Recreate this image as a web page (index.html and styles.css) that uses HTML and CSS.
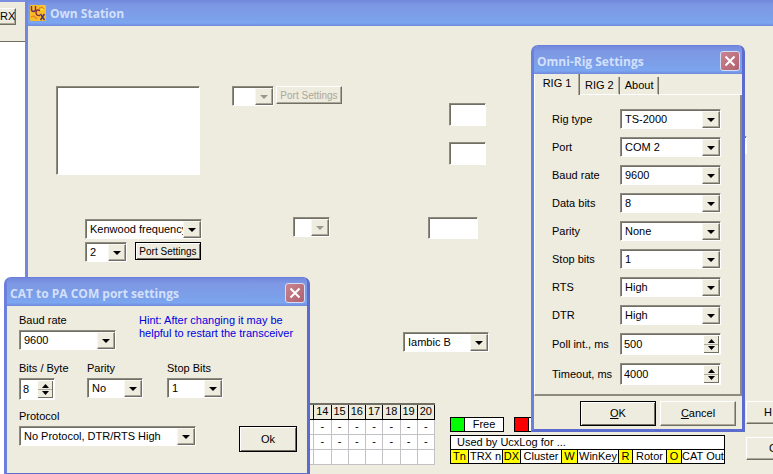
FILE: index.html
```html
<!DOCTYPE html>
<html lang="en">
<head>
<meta charset="utf-8">
<title>Own Station</title>
<link rel="stylesheet" href="styles.css">
</head>
<body>
<div class="log-window">
  <div class="log-toolbar"><button class="btn btn-trx" type="button">RX</button></div>
</div>

<main class="station">
  <header class="titlebar station-title">
    <svg class="app-icon" viewBox="0 0 16 16" aria-hidden="true">
      <rect width="16" height="16" rx="1" fill="#f9bd28"/>
      <circle cx="12" cy="3" r="2.500" fill="#ffe23c"/>
      <path d="M9 3.500l3-1.500 2 2M1 12l3-1 3 3" stroke="#e8862a" stroke-width="1.500" fill="none"/>
      <path d="M1.500 1v3.500q0 2 2 2t2-2V1" stroke="#6b2a5e" stroke-width="1.400" fill="none"/>
      <path d="M10 5.500q-4-1.500-4 2t4 3" stroke="#8a2a3c" stroke-width="1.400" fill="none"/>
      <path d="M10.500 9l4 6M14.500 9l-4 6" stroke="#4c2c84" stroke-width="1.400" fill="none"/>
    </svg>
    <h1>Own Station</h1>
  </header>

  <div class="form">
    <div class="row row-top">
      <textarea class="field memo" aria-label="Stations"></textarea>
      <div class="port-pair">
        <span class="combo is-disabled w-port"><select aria-label="Port" disabled><option></option></select></span>
        <button class="btn btn-port" type="button" disabled>Port Settings</button>
      </div>
      <div class="small-fields">
        <input class="field" aria-label="Value 1">
        <input class="field" aria-label="Value 2">
      </div>
      <input class="field far-field" aria-label="Value 3">
    </div>

    <div class="row row-mid">
      <div class="cat-group">
        <span class="combo w-kenwood"><select aria-label="CAT output"><option>Kenwood frequency</option></select></span>
        <div class="cat-line">
          <span class="combo w-port"><select aria-label="CAT port"><option>2</option></select></span>
          <button class="btn btn-port is-default" type="button">Port Settings</button>
        </div>
      </div>
      <span class="combo is-disabled w-aux"><select aria-label="Auxiliary port" disabled><option></option></select></span>
      <input class="field aux-field" aria-label="Auxiliary value">
    </div>

    <div class="row row-keyer">
      <span class="combo w-keyer"><select aria-label="Keyer mode"><option>Iambic B</option></select></span>
    </div>

    <div class="row row-bottom">
      <table class="ports">
        <thead><tr><th></th><th>14</th><th>15</th><th>16</th><th>17</th><th>18</th><th>19</th><th>20</th></tr></thead>
        <tbody>
          <tr><td></td><td>-</td><td>-</td><td>-</td><td>-</td><td>-</td><td>-</td><td>-</td></tr>
          <tr><td></td><td>-</td><td>-</td><td>-</td><td>-</td><td>-</td><td>-</td><td>-</td></tr>
          <tr><td></td><td></td><td></td><td></td><td></td><td></td><td></td><td></td></tr>
        </tbody>
      </table>
      <div class="legend">
        <div class="legend-states">
          <div class="state"><i class="swatch green"></i><span>Free</span></div>
          <div class="state"><i class="swatch red"></i><span></span></div>
        </div>
        <div class="legend-box">
          <div class="legend-head">Used by UcxLog for ...</div>
          <div class="legend-keys">
            <b>Tn</b><span>TRX n</span><b>DX</b><span>Cluster</span><b>W</b><span>WinKey</span><b>R</b><span>Rotor</span><b>O</b><span>CAT Out</span>
          </div>
        </div>
      </div>
      <div class="side-buttons">
        <button class="btn" type="button">H</button>
        <button class="btn btn-second" type="button">C</button>
      </div>
    </div>
  </div>
</main>

<section class="dialog rig" aria-labelledby="rig-title">
  <header class="titlebar">
    <h2 id="rig-title">Omni-Rig Settings</h2>
    <button class="close" type="button" aria-label="Close"><svg viewBox="0 0 12 12"><path d="M1.500 1.500l9 9M10.500 1.500l-9 9"/></svg></button>
  </header>
  <div class="dialog-body">
    <div class="tabs" role="tablist">
      <button class="tab is-active" type="button" role="tab" aria-selected="true">RIG 1</button>
      <button class="tab" type="button" role="tab" aria-selected="false">RIG 2</button>
      <button class="tab" type="button" role="tab" aria-selected="false">About</button>
    </div>
    <div class="rig-panel">
      <label for="rig-type">Rig type</label><span class="combo"><select id="rig-type"><option>TS-2000</option></select></span>
      <label for="rig-port">Port</label><span class="combo"><select id="rig-port"><option>COM 2</option></select></span>
      <label for="rig-baud">Baud rate</label><span class="combo"><select id="rig-baud"><option>9600</option></select></span>
      <label for="rig-data">Data bits</label><span class="combo"><select id="rig-data"><option>8</option></select></span>
      <label for="rig-parity">Parity</label><span class="combo"><select id="rig-parity"><option>None</option></select></span>
      <label for="rig-stop">Stop bits</label><span class="combo"><select id="rig-stop"><option>1</option></select></span>
      <label for="rig-rts">RTS</label><span class="combo"><select id="rig-rts"><option>High</option></select></span>
      <label for="rig-dtr">DTR</label><span class="combo"><select id="rig-dtr"><option>High</option></select></span>
      <label for="rig-poll">Poll int., ms</label><span class="spinner"><input id="rig-poll" type="number" value="500"><svg viewBox="0 0 15 17" aria-hidden="true"><path d="M4 7h7L7.500 3zM4 10h7l-3.500 4z"/></svg></span>
      <label for="rig-timeout">Timeout, ms</label><span class="spinner"><input id="rig-timeout" type="number" value="4000"><svg viewBox="0 0 15 17" aria-hidden="true"><path d="M4 7h7L7.500 3zM4 10h7l-3.500 4z"/></svg></span>
    </div>
    <div class="rig-actions">
      <button class="btn is-default" type="button"><u>O</u>K</button>
      <button class="btn" type="button"><u>C</u>ancel</button>
    </div>
  </div>
</section>

<section class="dialog cat" aria-labelledby="cat-title">
  <header class="titlebar">
    <h2 id="cat-title">CAT to PA COM port settings</h2>
    <button class="close" type="button" aria-label="Close"><svg viewBox="0 0 12 12"><path d="M1.500 1.500l9 9M10.500 1.500l-9 9"/></svg></button>
  </header>
  <div class="dialog-body cat-body">
    <div class="cat-row">
      <div class="stack w-baud"><label for="cat-baud">Baud rate</label><span class="combo"><select id="cat-baud"><option>9600</option></select></span></div>
      <p class="hint">Hint: After changing it may be<br>helpful to restart the transceiver</p>
    </div>
    <div class="cat-row">
      <div class="stack w-bits"><label for="cat-bits">Bits / Byte</label><span class="spinner"><input id="cat-bits" type="number" value="8"><svg viewBox="0 0 15 17" aria-hidden="true"><path d="M4 7h7L7.500 3zM4 10h7l-3.500 4z"/></svg></span></div>
      <div class="stack w-parity"><label for="cat-parity">Parity</label><span class="combo"><select id="cat-parity"><option>No</option></select></span></div>
      <div class="stack w-parity"><label for="cat-stop">Stop Bits</label><span class="combo"><select id="cat-stop"><option>1</option></select></span></div>
    </div>
    <div class="cat-row cat-last">
      <div class="stack w-protocol"><label for="cat-protocol">Protocol</label><span class="combo"><select id="cat-protocol"><option>No Protocol, DTR/RTS High</option></select></span></div>
      <button class="btn is-default" type="button">Ok</button>
    </div>
  </div>
</section>
</body>
</html>
```
FILE: styles.css
```css
:root {
  --face: #eeebdf;
  --dark: #716f64;
  --mid: #aca899;
  --frame: #6b7fdc;
}

* { box-sizing: border-box; }

body {
  margin: 0;
  height: 100vh;
  position: relative;
  overflow: hidden;
  background: #fff;
  color: #000;
  font: 11px/13px "Liberation Sans", Arial, sans-serif;
}

h1, h2, p { margin: 0; }
button, input, select, textarea { font: inherit; color: inherit; margin: 0; }

/* Raised and sunken controls */
.btn {
  padding: 0;
  background: var(--face);
  border: 1px solid;
  border-color: #fff var(--dark) var(--dark) #fff;
  box-shadow: inset -1px -1px var(--mid);
  border-radius: 0;
  white-space: nowrap;
}
.btn.is-default {
  border-color: #000;
  box-shadow: inset 1px 1px #fff, inset -1px -1px var(--dark);
}
.btn:disabled { color: #aca899; }

.field, .combo, .spinner {
  border: 1px solid;
  border-color: #8d8b80 #fff #fff #8d8b80;
  box-shadow: inset 1px 1px var(--dark);
  background: #fff;
}
.field { border-radius: 0; outline: 0; padding: 2px 4px; resize: none; }

.combo { display: block; position: relative; height: 20px; }
.combo select {
  appearance: none;
  display: block;
  width: 100%;
  height: 18px;
  padding: 1px 17px 0 4px;
  border: 0;
  border-radius: 0;
  background: transparent;
  opacity: 1;
  outline: 0;
  overflow: hidden;
  text-overflow: clip;
}
.combo::before {
  content: "";
  position: absolute;
  top: 1px;
  right: 0;
  bottom: 0;
  width: 16px;
  background: var(--face);
  border: 1px solid;
  border-color: #f8f7f2 var(--dark) var(--dark) #f8f7f2;
  box-shadow: inset -1px -1px var(--mid);
  pointer-events: none;
}
.combo::after {
  content: "";
  position: absolute;
  top: 8px;
  right: 5px;
  border: solid transparent;
  border-width: 4px 4px 0;
  border-top-color: #000;
  pointer-events: none;
}
.combo.is-disabled::after { border-top-color: #9b988a; }

.spinner { display: flex; height: 22px; padding: 2px 1px 1px 3px; }
.spinner input {
  appearance: textfield;
  flex: 1;
  min-width: 0;
  padding: 0;
  border: 0;
  background: transparent;
  outline: 0;
}
.spinner input::-webkit-inner-spin-button { display: none; }
.spinner svg {
  width: 15px;
  height: 17px;
  background: linear-gradient(var(--face) 47%, var(--mid) 47%, var(--mid) 53%, var(--face) 53%);
  box-shadow: inset -1px -1px var(--dark);
}

/* Title bars */
.titlebar {
  display: flex;
  align-items: center;
  color: #d3e0fb;
  background: linear-gradient(#7188dc, #7e98e4 20%, #7c9ee8 60%, #7ba6f0 88%, #7188dc);
}
.titlebar h1, .titlebar h2 {
  flex: 1;
  padding-top: 1px;
  font: bold 12px/16px "Open Sans", "Noto Sans", sans-serif;
  white-space: nowrap;
}

/* Window behind */
.log-window { position: absolute; top: 0; left: 0; width: 28px; height: 100%; }
.log-toolbar {
  height: 42px;
  padding-top: 6px;
  background: var(--face);
  border-top: 2px solid #7d8fe0;
  border-bottom: 1px solid var(--dark);
}
.btn-trx { display: block; width: 16px; height: 17px; border-left: 0; }

/* Own Station */
.station {
  position: absolute;
  inset: 0 0 0 25px;
  overflow: hidden;
  background: var(--face);
  border-left: 3px solid #7587dd;
}
.station-title { height: 26px; gap: 4px; padding-left: 2px; }
.app-icon { width: 16px; height: 16px; }

.form { padding: 60px 0 0 28px; }
.row { display: flex; align-items: flex-start; }
.row > * { flex-shrink: 0; }

.row-top { height: 131px; }
.memo { width: 144px; height: 89px; margin-right: 32px; }
.port-pair { display: flex; gap: 2px; margin-right: 107px; }
.w-port { width: 42px; }
.btn-port { width: 66px; height: 18px; font-size: 10px; }
.small-fields { display: grid; gap: 16px; margin: 17px 223px 0 0; }
.small-fields .field { width: 37px; height: 23px; }
.far-field { width: 38px; height: 18px; margin-top: 50px; }

.row-mid { height: 115px; padding-left: 29px; }
.cat-group { display: grid; gap: 3px; margin: 2px 91px 0 0; }
.cat-line { display: flex; gap: 8px; }
.w-kenwood { width: 117px; }
.w-aux { width: 37px; margin-right: 98px; }
.aux-field { width: 50px; height: 22px; }

.row-keyer { height: 69px; padding-left: 347px; }
.w-keyer { width: 86px; }

.row-bottom { padding-left: 240px; }

.ports {
  table-layout: fixed;
  width: 139px;
  margin-top: 2px;
  border-collapse: collapse;
  border-top: 2px solid var(--dark);
  background: #fff;
}
.ports th, .ports td {
  height: 15px;
  padding: 0;
  line-height: 13px;
  text-align: center;
  border: 1px solid #c3c0c6;
}
.ports th {
  font-weight: normal;
  background: var(--face);
  border-color: #000;
  border-top-color: var(--dark);
}

.legend { width: 275px; margin: 16px 21px 0 15px; }
.legend-states { display: flex; gap: 10px; margin-bottom: 3px; }
.state { display: flex; width: 54px; height: 15px; border: 1px solid #000; background: #fff; }
.state span { flex: 1; text-align: center; border-left: 1px solid #000; }
.swatch { width: 13px; }
.green { background: #0f0; }
.red { background: #f00; }
.legend-box { border: 1px solid #000; background: #fff; }
.legend-head { height: 14px; padding-left: 6px; border-bottom: 1px solid #000; }
.legend-keys { display: grid; grid-template-columns: 17px 34px 18px 41px 16px 41px 14px 34px 15px 1fr; height: 13px; }
.legend-keys > * { text-align: center; white-space: nowrap; overflow: hidden; }
.legend-keys > * + * { border-left: 1px solid #000; }
.legend-keys b { font-weight: normal; background: #ff0; }

.side-buttons { display: grid; gap: 13px; }
.side-buttons .btn { width: 75px; height: 23px; padding-left: 17px; text-align: left; }
.side-buttons .btn-second { padding-left: 22px; }

/* Dialogs */
.dialog {
  position: absolute;
  border: 3px solid var(--frame);
  border-top-width: 1px;
  border-right-color: #5c6cce;
  border-bottom-color: #5c6cce;
  border-radius: 7px 7px 0 0;
  background: var(--face);
}
.dialog .titlebar { height: 28px; padding: 2px 2px 0 3px; border-radius: 4px 4px 0 0; }
.close {
  width: 20px;
  height: 20px;
  padding: 3px;
  border: 1px solid #d5dcf8;
  border-radius: 3px;
  background: linear-gradient(135deg, #c98590, #b0606f);
}
.close svg { display: block; width: 12px; height: 12px; }
.close path { stroke: #fff; stroke-width: 2; }

.rig { top: 45px; left: 531px; width: 214px; }
.tabs { display: flex; align-items: flex-end; height: 21px; }
.tab {
  height: 18px;
  padding: 0 5px;
  background: none;
  border: 0;
  border-right: 1px solid var(--dark);
  box-shadow: inset -1px 0 var(--mid);
  white-space: nowrap;
}
.tab.is-active { width: 46px; height: 21px; padding: 0 6px 3px; border-left: 1px solid #fff; }
.tab:not(.is-active) { border-bottom: 1px solid #fff; }
.tabs::after { content: ""; flex: 1; height: 1px; background: #fff; }
.rig-panel {
  display: grid;
  grid-template-columns: 68px minmax(0, 1fr);
  align-items: center;
  row-gap: 8px;
  padding: 14px 19px 9px 17px;
  border: solid;
  border-width: 0 2px 2px 1px;
  border-color: #fff #8d8b80 #8d8b80 #fff;
}
.rig-actions { display: flex; justify-content: flex-end; gap: 4px; padding: 5px 6px 3px; }
.rig-actions .btn { width: 76px; height: 25px; }

.cat { top: 277px; left: 4px; width: 306px; height: 199px; }
.cat-body { padding: 8px 10px 0 12px; }
.cat-row { display: flex; height: 48px; }
.stack { display: grid; align-content: start; gap: 3px; }
.w-baud { width: 97px; margin-right: 23px; }
.w-bits { width: 68px; }
.w-bits .spinner { width: 36px; }
.w-parity { width: 56px; margin-right: 24px; }
.w-protocol { width: 177px; }
.cat-last { justify-content: space-between; }
.cat-last .btn { width: 58px; height: 26px; margin-top: 16px; }
.hint { color: #0000e0; white-space: nowrap; }
```
